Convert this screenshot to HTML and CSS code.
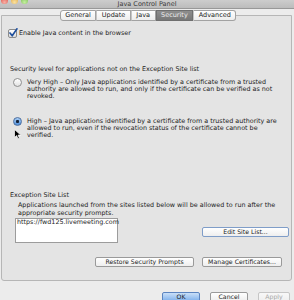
FILE: index.html
```html
<!DOCTYPE html>
<html lang="en">
<head>
  <meta charset="UTF-8" />
  <meta name="viewport" content="width=device-width, initial-scale=1" />
  <title>Java Control Panel</title>
  <link rel="stylesheet" href="styles.css">
</head>
<body>
  <div class="titlebar">
    <div class="lights">
      <span class="light red"></span>
      <span class="light amber"></span>
      <span class="light green"></span>
    </div>
    <div class="title">Java Control Panel</div>
  </div>

  <nav class="tabs">
    <span class="tab">General</span>
    <span class="tab">Update</span>
    <span class="tab">Java</span>
    <span class="tab active">Security</span>
    <span class="tab">Advanced</span>
  </nav>

  <section class="panel">
    <label class="check-row">
      <span class="checkbox">
        <svg viewBox="0 0 10 10" width="10" height="10">
          <path d="M2 5 L4.2 7.8 L9 0.8" fill="none" stroke="#1f4f9c" stroke-width="1.6" stroke-linecap="round" stroke-linejoin="round"/>
        </svg>
      </span>
      Enable Java content in the browser
    </label>

    <p class="heading">Security level for applications not on the Exception Site list</p>

    <div class="option">
      <span class="radio"></span>
      <p>Very High &ndash; Only Java applications identified by a certificate from a trusted authority are allowed to run, and only if the certificate can be verified as not revoked.</p>
    </div>

    <div class="option second">
      <span class="radio selected"></span>
      <p>High &ndash; Java applications identified by a certificate from a trusted authority are allowed to run, even if the revocation status of the certificate cannot be verified.</p>
      <svg class="cursor" viewBox="0 0 8 11" width="8" height="11">
        <path d="M0.5 0.5 L0.5 8.5 L2.6 6.6 L4 9.8 L5.4 9.2 L4 6.1 L6.8 6.1 Z" fill="#000" stroke="#fff" stroke-width="0.7"/>
      </svg>
    </div>

    <div class="exceptions">
      <p class="heading">Exception Site List</p>
      <p class="desc">Applications launched from the sites listed below will be allowed to run after the appropriate security prompts.</p>
      <div class="site-row">
        <div class="site-box">https://fwd125.livemeeting.com</div>
        <button class="btn focus">Edit Site List...</button>
      </div>
    </div>

    <div class="panel-actions">
      <button class="btn">Restore Security Prompts</button>
      <button class="btn">Manage Certificates...</button>
    </div>
  </section>

  <div class="dialog-actions">
    <button class="btn default">OK</button>
    <button class="btn">Cancel</button>
    <button class="btn" disabled>Apply</button>
  </div>
</body>
</html>
```

FILE: styles.css
```css
html, body {
  margin: 0;
  height: 100%;
}

body {
  background: #ececec;
  font-family: "DejaVu Sans", Verdana, sans-serif;
  font-size: 6.4px;
  line-height: 7px;
  color: #1b1b1b;
  overflow: hidden;
}

p {
  margin: 0;
}

/* window chrome */
.titlebar {
  display: grid;
  grid-template-columns: 1fr auto 1fr;
  height: 8px;
  background: linear-gradient(#cdcdcd, #bcbcbc);
  border-bottom: 1px solid #989898;
  overflow: hidden;
}

.lights {
  display: flex;
  gap: 3px;
  margin: -3px 0 0 1px;
}

.light {
  width: 7px;
  height: 7px;
  border-radius: 50%;
}

.red { background: radial-gradient(circle at 50% 75%, #f9b0a6, #d8463a); }
.amber { background: radial-gradient(circle at 50% 75%, #fbe2a0, #dca23a); }
.green { background: radial-gradient(circle at 50% 75%, #c6ef9f, #6cb64a); }

.title {
  font-size: 6.5px;
  line-height: 8px;
  color: #3b3b3b;
}

/* tabs sit on top of the panel border */
.tabs {
  display: flex;
  justify-content: center;
  margin: 1px 0 0 2px;
  position: relative;
  z-index: 1;
}

.tab {
  height: 9px;
  line-height: 9px;
  padding: 0 4.5px;
  font-size: 6.5px;
  background: linear-gradient(#fefefe, #ededed);
  border: 1px solid #a2a2a2;
  border-left: 1px solid #c4c4c4;
}

.tab:first-child {
  border-left-color: #a2a2a2;
  border-radius: 3px 0 0 3px;
}

.tab:last-child {
  border-radius: 0 3px 3px 0;
}

.tab.active {
  background: linear-gradient(#8d8d8d, #777);
  border-color: #6f6f6f;
  color: #ececec;
}

.panel {
  margin: -6px 2px 0 1px;
  padding: 0 0 13px 8px;
  background: #e4e4e4;
  border: 1px solid #b6b6b6;
  border-radius: 0 0 3px 3px;
}

.check-row {
  display: flex;
  align-items: center;
  gap: 2px;
  margin: 13px 0 0 -2px;
  line-height: 9px;
}

.checkbox {
  width: 7px;
  height: 7px;
  border: 1px solid #8c8c8c;
  border-radius: 2px;
  background: linear-gradient(#fff, #dcdcdc);
  position: relative;
}

.checkbox svg {
  position: absolute;
  left: -1px;
  top: -2px;
}

.heading {
  margin-top: 28px;
}

.option {
  display: flex;
  gap: 5px;
  margin: 5px 0 0 3px;
  position: relative;
}

.option p {
  margin-top: 1px;
  width: 252px;
}

.option.second {
  margin-top: 17px;
}

.radio {
  flex: none;
  width: 7px;
  height: 7px;
  border: 1px solid #8f8f8f;
  border-radius: 50%;
  background: linear-gradient(#fff, #e2e2e2);
}

.radio.selected {
  border-color: #4d6f9f;
  background: radial-gradient(circle, #15233a 0 1.3px, transparent 1.8px),
              linear-gradient(#a9cdf4, #4f8fdb);
}

.cursor {
  position: absolute;
  left: 1px;
  top: 12px;
}

.exceptions {
  margin-top: 53px;
}

.desc {
  margin: 2px 0 0 8px;
  line-height: 8px;
  width: 266px;
}

.site-row {
  display: flex;
  justify-content: space-between;
  align-items: flex-start;
  margin: 1px 2px 0 5px;
}

.site-box {
  width: 99px;
  height: 23px;
  padding: 0 1px;
  background: #fff;
  border: 1px solid #9c9c9c;
}

.btn {
  font: inherit;
  font-size: 6.2px;
  line-height: 8px;
  height: 10px;
  padding: 0 2px;
  white-space: nowrap;
  color: #1b1b1b;
  background: linear-gradient(#fff, #eee);
  border: 1px solid #9a9a9a;
  border-radius: 2px;
}

.site-row .btn {
  width: 87px;
  margin-top: 9px;
}

.btn.focus {
  border-color: #7f9dc8;
}

.panel-actions {
  display: flex;
  justify-content: flex-end;
  gap: 8px;
  margin: 14px 9px 0 0;
}

.panel-actions .btn:first-child {
  width: 99px;
}

.panel-actions .btn:last-child {
  width: 80px;
}

.dialog-actions {
  display: flex;
  justify-content: flex-end;
  gap: 10px;
  margin: 11px 4px 0 0;
}

.dialog-actions .btn {
  width: 38px;
}

.dialog-actions .btn:last-child {
  width: 32px;
}

.btn.default {
  background: linear-gradient(#c9dff8, #7eb0ec);
  border-color: #5b84c0;
}

.btn:disabled {
  color: #a6a6a6;
  border-color: #c6c6c6;
  background: linear-gradient(#f8f8f8, #efefef);
}
```
